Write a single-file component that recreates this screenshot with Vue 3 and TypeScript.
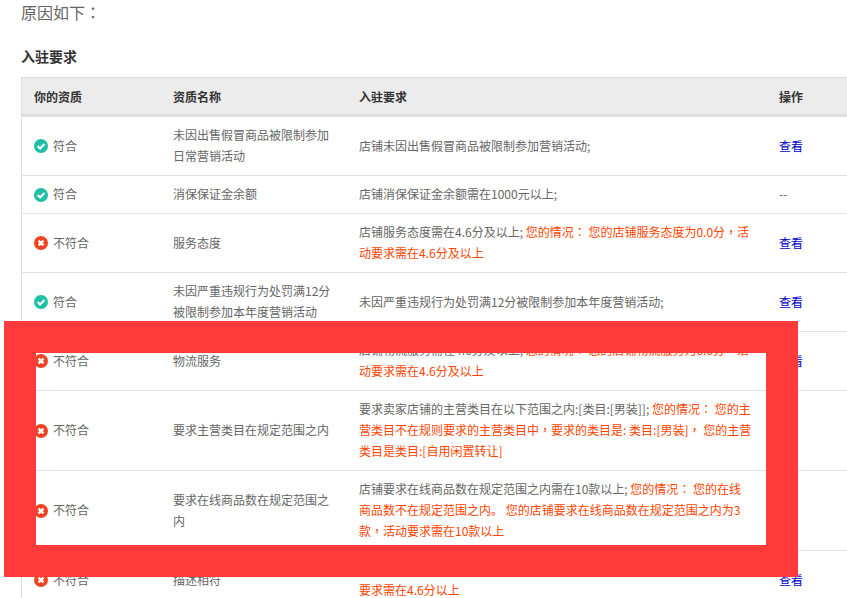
<script setup lang="ts">
interface Row {
  ok: boolean
  name: string
  req: string
  warn?: string
  link: boolean
}

const rows: Row[] = [
  { ok: true, name: '未因出售假冒商品被限制参加日常营销活动', req: '店铺未因出售假冒商品被限制参加营销活动;', link: true },
  { ok: true, name: '消保保证金余额', req: '店铺消保保证金余额需在1000元以上;', link: false },
  { ok: false, name: '服务态度', req: '店铺服务态度需在4.6分及以上; ', warn: '您的情况： 您的店铺服务态度为0.0分，活动要求需在4.6分及以上', link: true },
  { ok: true, name: '未因严重违规行为处罚满12分被限制参加本年度营销活动', req: '未因严重违规行为处罚满12分被限制参加本年度营销活动;', link: true },
  { ok: false, name: '物流服务', req: '店铺物流服务需在4.6分及以上; ', warn: '您的情况： 您的店铺物流服务为0.0分，活动要求需在4.6分及以上', link: true },
  { ok: false, name: '要求主营类目在规定范围之内', req: '要求卖家店铺的主营类目在以下范围之内:[类目:[男装]]; ', warn: '您的情况： 您的主营类目不在规则要求的主营类目中，要求的类目是: 类目:[男装]， 您的主营类目是类目:[自用闲置转让]', link: false },
  { ok: false, name: '要求在线商品数在规定范围之内', req: '店铺要求在线商品数在规定范围之内需在10款以上; ', warn: '您的情况： 您的在线商品数不在规定范围之内。 您的店铺要求在线商品数在规定范围之内为3款，活动要求需在10款以上', link: false },
  { ok: false, name: '描述相符', req: '店铺描述相符需在4.6分以上; ', warn: '您的情况： 您的店铺描述相符为0.0分，活动要求需在4.6分以上', link: true },
]

// Full-width colon and comma sit centred in their cell in the reference.
const parts = (s: string): string[] => s.split(/([：，])/).filter(Boolean)
const isMark = (s: string): boolean => s === '：' || s === '，'
</script>

<template>
  <div class="page">
    <div class="reason">原因如下<span class="mark">：</span></div>
    <h3 class="heading">入驻要求</h3>
    <table class="grid">
      <colgroup>
        <col class="c1" />
        <col class="c2" />
        <col class="c3" />
        <col class="c4" />
      </colgroup>
      <thead>
        <tr>
          <th>你的资质</th>
          <th>资质名称</th>
          <th>入驻要求</th>
          <th>操作</th>
        </tr>
      </thead>
      <tbody>
        <tr v-for="(r, i) in rows" :key="i">
          <td>
            <span class="status">
              <svg class="icon" viewBox="0 0 14 14" aria-hidden="true">
                <circle cx="7" cy="7" r="7" :fill="r.ok ? '#1dbfa5' : '#ee4422'" />
                <path v-if="r.ok" d="M3.6 7 6.1 9.5 10.5 4.9" fill="none" stroke="#fff" stroke-width="2.2" />
                <path v-else d="M4.6 4.6 9.4 9.4M9.4 4.6 4.6 9.4" fill="none" stroke="#fff" stroke-width="2.4" />
              </svg>
              <span>{{ r.ok ? '符合' : '不符合' }}</span>
            </span>
          </td>
          <td>{{ r.name }}</td>
          <td class="req">{{ r.req }}<span v-if="r.warn" class="warn"><template v-for="(p, j) in parts(r.warn)" :key="j"><span v-if="isMark(p)" class="mark">{{ p }}</span><template v-else>{{ p }}</template></template></span></td>
          <td>
            <a v-if="r.link" class="link" href="#">查看</a>
            <span v-else-if="!r.warn">--</span>
          </td>
        </tr>
      </tbody>
    </table>
    <div class="frame"></div>
  </div>
</template>

<style>
html,
body {
  margin: 0;
  overflow: hidden;
}
</style>

<style scoped>
.page {
  position: relative;
  width: 847px;
  height: 598px;
  overflow: hidden;
  padding-left: 21px;
  box-sizing: border-box;
  background: #fff;
  font-family: "Noto Sans CJK SC", "Noto Sans", sans-serif;
  font-size: 12px;
  color: #666;
}
.reason {
  font-size: 16px;
  line-height: 24px;
  color: #666;
}
.mark {
  font-family: "Noto Sans CJK TC", "Noto Sans", sans-serif;
}
.heading {
  margin: 20px 0 0;
  height: 33px;
  font-size: 14px;
  line-height: 24px;
  font-weight: 700;
  color: #333;
}
.grid {
  width: 900px;
  table-layout: fixed;
  border-collapse: separate;
  border-spacing: 0;
  border-left: 1px solid #ddd;
  border-top: 1px solid #ddd;
}
.c1 { width: 139px; }
.c2 { width: 186px; }
.c3 { width: 420px; }
.c4 { width: 155px; }
th {
  height: 39px;
  padding: 0 12px;
  box-sizing: border-box;
  background: #ececec;
  border-bottom: 3px solid #ddd;
  text-align: left;
  font-weight: 700;
  color: #333;
}
td {
  padding: 7px 12px 9px;
  line-height: 21px;
  border-bottom: 1px solid #e3e3e3;
  vertical-align: middle;
  word-break: break-all;
}
td.req {
  padding-right: 15px;
}
.status {
  display: flex;
  align-items: center;
  gap: 5px;
}
.icon {
  width: 14px;
  height: 14px;
  flex: none;
  position: relative;
  top: 1px;
}
.warn {
  color: #f40;
}
.link {
  color: #00c;
  text-decoration: none;
}
.frame {
  position: absolute;
  left: 4px;
  top: 321px;
  width: 794px;
  height: 256px;
  box-sizing: border-box;
  border: 32px solid #fe3a3a;
}
</style>
